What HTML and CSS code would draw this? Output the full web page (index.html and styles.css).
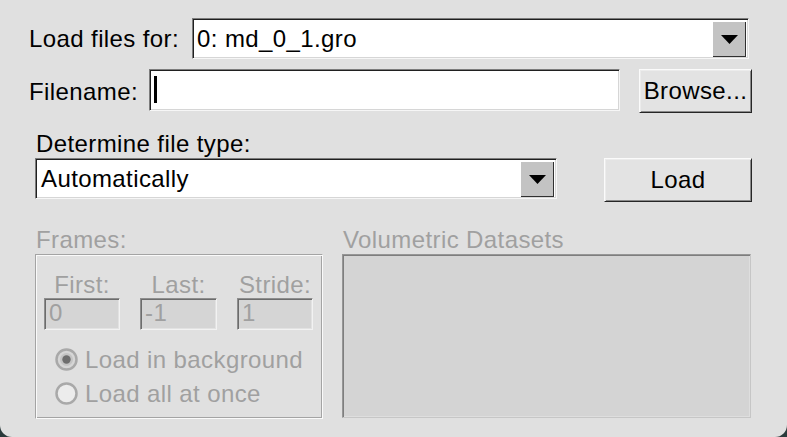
FILE: index.html
```html
<!DOCTYPE html>
<html>
<head>
<meta charset="utf-8">
<title>Load files</title>
<link rel="stylesheet" href="styles.css">
</head>
<body>
<div class="window">
  <div class="row row-target">
    <span class="label label-target">Load files for:</span>
    <div class="combo combo-target sunken">
      <span class="combo-text">0: md_0_1.gro</span>
      <span class="combo-arrow"><svg width="17" height="9" viewBox="0 0 17 9"><polygon points="0,0 17,0 8.5,9" fill="#000"/></svg></span>
    </div>
  </div>

  <div class="row row-file">
    <span class="label label-file">Filename:</span>
    <div class="entry entry-file sunken"><span class="caret"></span></div>
    <button class="btn btn-browse raised">Browse...</button>
  </div>

  <div class="type-section">
    <div class="type-col">
      <span class="label label-type">Determine file type:</span>
      <div class="combo combo-type sunken">
        <span class="combo-text">Automatically</span>
        <span class="combo-arrow"><svg width="17" height="9" viewBox="0 0 17 9"><polygon points="0,0 17,0 8.5,9" fill="#000"/></svg></span>
      </div>
    </div>
    <button class="btn btn-load raised">Load</button>
  </div>

  <div class="bottom">
    <div class="frames-col">
      <span class="label disabled label-sub">Frames:</span>
      <div class="groove frames-box">
        <div class="frame-grid">
          <span class="flabel disabled">First:</span>
          <span class="flabel disabled">Last:</span>
          <span class="flabel disabled">Stride:</span>
          <div class="dentry">0</div>
          <div class="dentry">-1</div>
          <div class="dentry">1</div>
        </div>
        <div class="radios">
          <div class="radio">
            <svg class="radio-dot" width="23" height="23" viewBox="0 0 23 23">
              <circle cx="11.5" cy="11.5" r="10" fill="#d6d6d6" stroke="#a9a9a9" stroke-width="2.5"/>
              <circle cx="11.5" cy="11.5" r="6.5" fill="#c4c4c4"/>
              <circle cx="11.5" cy="11.5" r="4.2" fill="#6e6e6e"/>
            </svg>
            <span class="disabled">Load in background</span>
          </div>
          <div class="radio">
            <svg class="radio-dot" width="23" height="23" viewBox="0 0 23 23">
              <circle cx="11.5" cy="11.5" r="10" fill="#ececec" stroke="#a9a9a9" stroke-width="2.5"/>
            </svg>
            <span class="disabled">Load all at once</span>
          </div>
        </div>
      </div>
    </div>
    <div class="vol-col">
      <span class="label disabled label-sub">Volumetric Datasets</span>
      <div class="listbox"></div>
    </div>
  </div>
</div>
</body>
</html>
```

FILE: styles.css
```css
* {
  box-sizing: border-box;
}

html, body {
  margin: 0;
  padding: 0;
}

body {
  background: #2a3a3b;
  width: 787px;
  height: 437px;
  overflow: hidden;
  font-family: "Liberation Sans", Arial, sans-serif;
  font-size: 24px;
  letter-spacing: 0.4px;
  color: #000;
}

.window {
  width: 787px;
  height: 437px;
  background: #e0e0e0;
  border-radius: 0 0 12px 12px;
  padding-top: 18px;
  display: flex;
  flex-direction: column;
}

.row {
  display: flex;
  align-items: flex-start;
  padding-left: 29px;
}

.label {
  white-space: nowrap;
  line-height: 24px;
}

.disabled {
  color: #a0a0a0;
}

.sunken {
  border: 1px solid;
  border-color: #7c7c7c #f6f6f6 #f6f6f6 #7c7c7c;
  box-shadow: inset 1px 1px 0 #202020, inset -1px -1px 0 #d6d6d6;
}

.raised {
  border: 1px solid;
  border-color: #fbfbfb #262626 #262626 #fbfbfb;
  box-shadow: inset 1px 1px 0 #ececec, inset -1px -1px 0 #8a8a8a;
}

/* Row 1 */
.row-target {
  height: 41px;
}

.label-target {
  width: 163px;
  line-height: 41px;
}

.combo {
  display: flex;
  background: #fff;
  padding: 1px;
}

.combo-target {
  width: 557px;
  height: 41px;
}

.combo-text {
  flex: 1;
  padding-left: 3px;
  line-height: 37px;
  white-space: nowrap;
}

.combo-arrow {
  width: 33px;
  margin: 2px 1px 0 0;
  background: #c3c3c3;
  border-right: 1px solid #303030;
  border-bottom: 1px solid #303030;
  display: flex;
  align-items: center;
  justify-content: center;
}

/* Row 2 */
.row-file {
  margin-top: 10px;
  height: 44px;
}

.label-file {
  width: 120px;
  line-height: 42px;
  padding-top: 2px;
}

.entry {
  background: #fff;
}

.entry-file {
  width: 471px;
  height: 42px;
  padding: 6px 0 0 4px;
}

.caret {
  display: block;
  width: 3px;
  height: 27px;
  background: #000;
}

.btn {
  font-family: inherit;
  font-size: 24px;
  letter-spacing: 0.4px;
  color: #000;
  margin: 0;
  padding: 0;
  background: #e3e3e3;
  display: flex;
  align-items: center;
  justify-content: center;
  line-height: 24px;
}

.btn-browse {
  margin-left: 19px;
  width: 113px;
  height: 44px;
}

/* Type section */
.type-section {
  display: flex;
  align-items: flex-start;
  margin-top: 19px;
  padding-left: 35px;
}

.type-col {
  display: flex;
  flex-direction: column;
}

.label-type {
  padding-left: 1px;
}

.combo-type {
  margin-top: 2px;
  width: 522px;
  height: 41px;
}

.combo-type .combo-text {
  padding-left: 4px;
}

.btn-load {
  margin-top: 26px;
  margin-left: 47px;
  width: 148px;
  height: 44px;
}

/* Bottom */
.bottom {
  display: flex;
  align-items: flex-start;
  margin-top: 26px;
  padding-left: 35px;
}

.frames-col,
.vol-col {
  display: flex;
  flex-direction: column;
}

.label-sub {
  padding-left: 1px;
}

.groove {
  border: 1px solid;
  border-color: #a4a4a4 #fafafa #fafafa #a4a4a4;
  box-shadow: inset 1px 1px 0 #fafafa, inset -1px -1px 0 #a4a4a4;
}

.frames-box {
  margin-top: 2px;
  width: 288px;
  height: 165px;
  padding: 18px 0 0 8px;
}

.frame-grid {
  display: grid;
  grid-template-columns: 76px 77px 76px;
  column-gap: 20px;
}

.flabel {
  text-align: center;
  line-height: 24px;
  padding-bottom: 1px;
}

.dentry {
  height: 32px;
  background: #d5d5d5;
  color: #a0a0a0;
  border: 1px solid;
  border-color: #8e8e8e #f2f2f2 #f2f2f2 #8e8e8e;
  box-shadow: inset 1px 1px 0 #6c6c6c, inset -1px -1px 0 #e2e2e2;
  padding-left: 4px;
  line-height: 28px;
  white-space: nowrap;
  overflow: hidden;
}

.radios {
  margin-top: 13px;
  padding-left: 11px;
  display: flex;
  flex-direction: column;
}

.radio {
  display: flex;
  align-items: center;
  height: 34px;
  white-space: nowrap;
  line-height: 34px;
}

.radio-dot {
  margin-right: 7px;
  margin-top: -2px;
  flex: none;
}

.vol-col {
  margin-left: 19px;
}

.listbox {
  margin-top: 2px;
  width: 409px;
  height: 164px;
  background: #d4d4d4;
  border: 1px solid;
  border-color: #969696 #c6c6c6 #c6c6c6 #969696;
  box-shadow: inset 1px 1px 0 #7e7e7e, inset -1px -1px 0 #dedede;
}
```
